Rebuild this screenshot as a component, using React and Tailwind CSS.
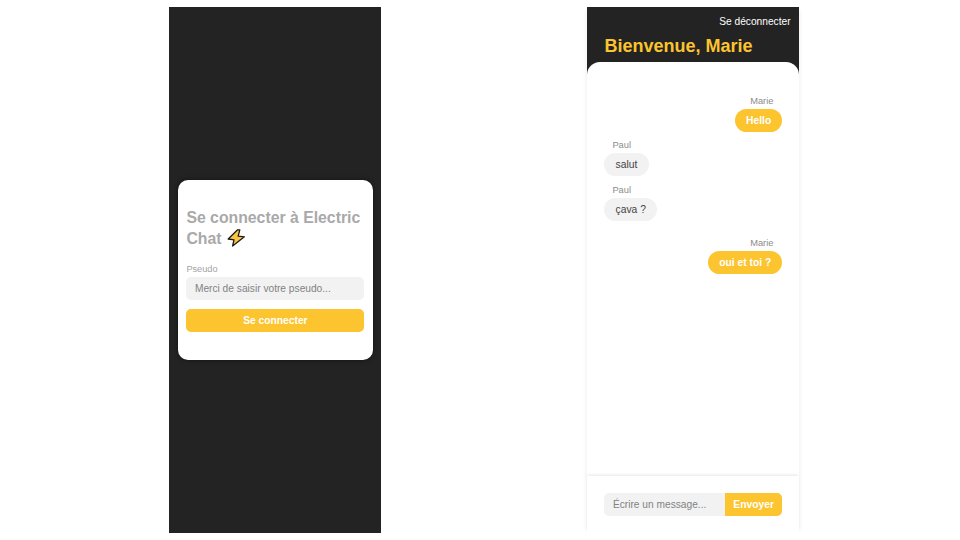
function Bolt() {
  return (
    <svg viewBox="0 0 20 20" className="ml-[4px] inline-block h-5 w-5 align-[-4px]" aria-hidden="true">
      <path d="M11.6 1.8 L2.2 11 L8 11.8 L6.6 18 L18.4 8.8 L12.2 8.2 L13.8 1.8 Z" fill="#fcc544" stroke="#1c1c1c" strokeWidth="1.3" strokeLinejoin="round" />
    </svg>
  );
}

function LoginScreen() {
  return (
    <section className="flex h-[526px] w-[212px] flex-col justify-center bg-[#232323] px-[8.5px]">
      <div className="h-[180px] rounded-[10px] bg-white px-[8.5px] pt-[27px] shadow-[0_0_5px_rgba(0,0,0,0.5)]">
        <h1 className="text-[15.8px] leading-[21px] font-bold text-[#a9a9a9]">
          Se connecter à Electric Chat
          <Bolt />
        </h1>
        <label className="mt-[14px] block text-[9.2px] leading-[12px] text-[#a3a3a3]">Pseudo</label>
        <div className="mt-[2px] h-[23px] rounded-[5px] bg-[#f2f2f2] px-[8.5px] text-[10.2px] leading-[24px] text-[#828282]">
          Merci de saisir votre pseudo...
        </div>
        <button className="mt-[9px] block h-[23px] w-full rounded-[5px] bg-[#fcc42e] text-[10.25px] leading-[23px] font-bold text-white">
          Se connecter
        </button>
      </div>
    </section>
  );
}

function Message({ author, text, own, className }) {
  return (
    <div className={`flex flex-col ${own ? "items-end" : "items-start"} ${className}`}>
      <span className={`text-[9.3px] leading-[12px] text-[#8c8c8c] ${own ? "pr-[9px]" : "pl-[8px]"}`}>{author}</span>
      <span
        className={`mt-[2px] h-[23px] rounded-full px-[11.2px] text-[10.3px] leading-[23px] ${
          own ? "bg-[#fcc42e] font-bold text-white" : "bg-[#f2f2f2] text-[#444]"
        }`}
      >
        {text}
      </span>
    </div>
  );
}

function ChatScreen() {
  return (
    <section className="flex h-[526px] w-[212px] flex-col bg-[linear-gradient(#232323_67px,#fff_67px)] shadow-[4px_0_4px_-3px_rgba(0,0,0,0.06),-4px_0_4px_-3px_rgba(0,0,0,0.06)]">
      <header className="h-[54.5px] pt-[7.5px]">
        <div className="pr-[8.8px] text-right text-[10.2px] leading-[13px] text-white">Se déconnecter</div>
        <h1 className="mt-[7px] pl-[17px] text-[18px] leading-[22px] font-bold text-[#fcc42e]">Bienvenue, Marie</h1>
      </header>
      <main className="flex-1 rounded-t-[13px] bg-white px-[17px] pt-[33px]">
        <Message author="Marie" text="Hello" own className="" />
        <Message author="Paul" text="salut" className="mt-[7.4px]" />
        <Message author="Paul" text="çava ?" className="mt-[7.6px]" />
        <Message author="Marie" text="oui et toi ?" own className="mt-[16.8px]" />
      </main>
      <footer className="flex h-[57px] bg-white px-[17px] pt-[16.5px] shadow-[0_-2px_3px_-1px_rgba(0,0,0,0.1)]">
        <div className="h-[23px] flex-1 rounded-l-[5px] bg-[#f2f2f2] pl-[8.5px] text-[10.2px] leading-[23px] text-[#828282]">
          Écrire un message...
        </div>
        <button className="h-[23px] w-[57.5px] rounded-r-[5px] bg-[#fcc42e] text-[10.3px] leading-[23px] font-bold text-white">
          Envoyer
        </button>
      </footer>
    </section>
  );
}

export default function App() {
  return (
    <div className="flex h-[540px] w-[960px] gap-[206px] overflow-hidden bg-white pt-[7.2px] pl-[169.4px] font-['Liberation_Sans',Arial,sans-serif]">
      <LoginScreen />
      <ChatScreen />
    </div>
  );
}
